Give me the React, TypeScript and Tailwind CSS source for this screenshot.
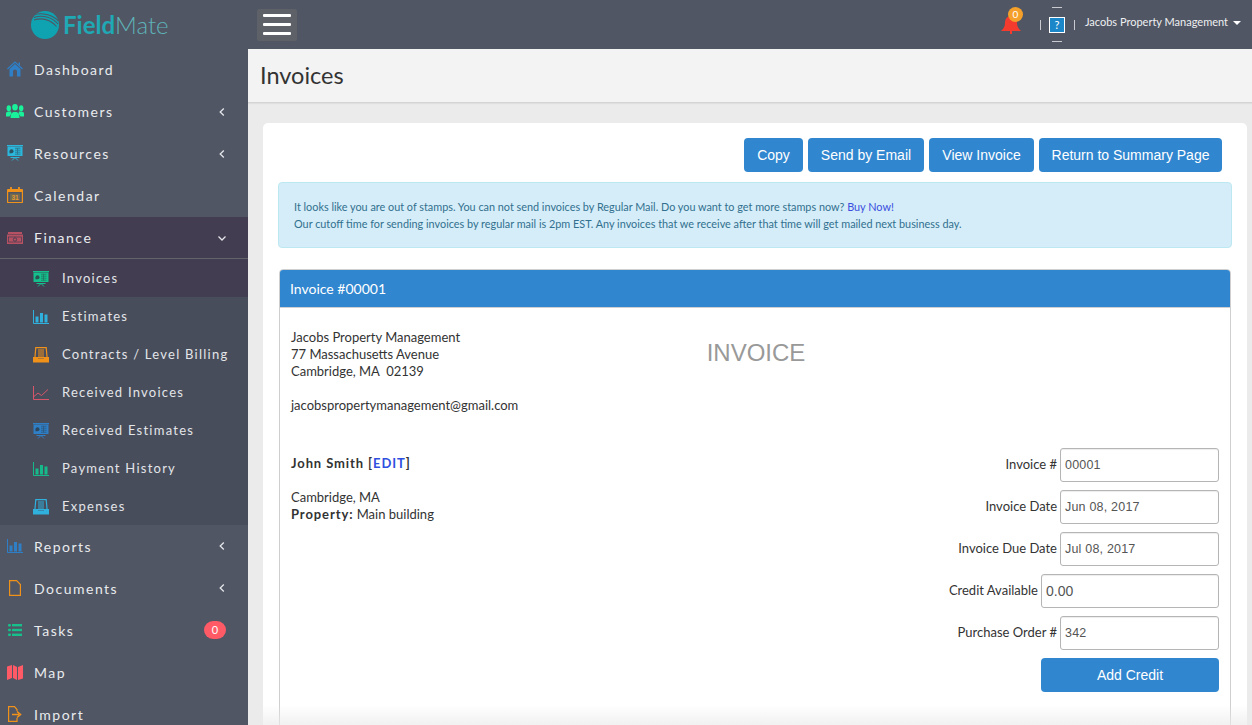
import React from 'react';

const Chevron = ({ down }: { down?: boolean }) => (
  <svg width="10" height="10" viewBox="0 0 10 10" fill="none" stroke="#e4e6ea" strokeWidth="1.3" className="absolute right-[21px] top-1/2 -translate-y-1/2">
    {down ? <path d="M1.5 3.5 5 7l3.5-3.5" /> : <path d="M6.8 1.5 3.2 5l3.6 3.500" />}
  </svg>
);

const Board = ({ color }: { color: string }) => (
  <svg width="16" height="16" viewBox="0 0 16 16">
    <rect x="0" y="0" width="16" height="1.200" fill={color} />
    <rect x=".5" y="1.500" width="15" height="9.500" fill={color} />
    <path d="M2.500 6.200a2 2 0 1 1 2 2h-2z" fill="#2c3a44" opacity=".8" />
    <path d="M8 3.200h5.500M8 5.200h5.500M8 7.200h5.500M8 9.200h5.500M10.500 3v6.500" stroke="#2c3a44" strokeWidth=".8" opacity=".55" />
    <path d="M3.500 12.500h9M8 12.500 5 15.500M8 12.500l3 3" stroke={color} strokeWidth="1" fill="none" />
  </svg>
);

const Bars = ({ color }: { color: string }) => (
  <svg width="16" height="14" viewBox="0 0 16 14">
    <path d="M.5 0v13.500H16" stroke={color} fill="none" />
    <rect x="2.500" y="6.500" width="3" height="6" fill={color} />
    <rect x="7" y="3" width="3" height="9.500" fill={color} />
    <rect x="11.500" y="4.500" width="3" height="8" fill={color} />
  </svg>
);

const Tray = ({ color }: { color: string }) => (
  <svg width="16" height="16" viewBox="0 0 16 16">
    <path d="M2.800 .6h10.400l.9 10H1.900z" fill="none" stroke={color} strokeWidth="1.200" />
    <path d="M5 3h6M5 5h6M5 7h6M5 9h6" stroke={color} strokeWidth="1.100" />
    <path d="M0 10h5v1.500h6V10h5v5.500H0z" fill={color} />
  </svg>
);

const Home = () => (
  <svg width="16" height="16" viewBox="0 0 16 16">
    <path d="M.5 8 8 1l7.500 7" fill="none" stroke="#2f7fc6" strokeWidth="1.200" />
    <path d="M11.500 1.500H13v3.500l-1.500-1.500z" fill="#2f7fc6" />
    <path d="M8 3 2.500 8v7.500h3.500V10.500a2 2 0 0 1 4 0v5h3.500V8z" fill="#2f7fc6" />
  </svg>
);

const People = () => (
  <svg width="18" height="14" viewBox="0 0 18 14" fill="#19f29a">
    <ellipse cx="9" cy="3.200" rx="2.800" ry="3.200" />
    <ellipse cx="2.800" cy="4.200" rx="2.200" ry="3" />
    <ellipse cx="15.200" cy="4.200" rx="2.200" ry="3" />
    <path d="M4.500 14c0-3 .5-5 2.800-6h3.400c2.300 1 2.800 3 2.800 6z" />
    <path d="M0 12.500V9.500c0-1 .8-1.500 2-2h3l.5 2-2 3zM18 12.500V9.500c0-1-.8-1.500-2-2h-3l-.5 2 2 3z" />
  </svg>
);

const Calendar = () => (
  <svg width="16" height="16" viewBox="0 0 16 16">
    <rect x=".6" y="2.500" width="14.800" height="13" rx=".5" fill="none" stroke="#f0921a" strokeWidth="1.200" />
    <rect x=".6" y="2.500" width="14.800" height="2.500" fill="#f0921a" />
    <path d="M4 0v3.500M12 0v3.500" stroke="#f0921a" strokeWidth="1.800" />
    <rect x="3" y="6.500" width="10" height="7" fill="#6f6a55" />
    <text x="8" y="12.500" textAnchor="middle" fontSize="6.500" fontWeight="700" fontFamily="Liberation Sans" fill="#e59a2c">31</text>
  </svg>
);

const Money = () => (
  <svg width="16" height="12" viewBox="0 0 16 12">
    <rect x="1" y="0" width="14" height="2" fill="#b65163" />
    <rect x="0" y="2.500" width="16" height="9.500" fill="#b65163" />
    <rect x="1.500" y="5" width="13" height="5" fill="none" stroke="#423d50" strokeWidth=".7" />
    <circle cx="8" cy="7.500" r="1.700" fill="none" stroke="#423d50" strokeWidth=".9" />
  </svg>
);

const Chart = () => (
  <svg width="16" height="14" viewBox="0 0 16 14" fill="none" stroke="#d9556a">
    <path d="M.5 0v13.500H16" />
    <path d="M1 10.500 5 7l3.500 2.500L15 3.500" />
  </svg>
);

const Doc = () => (
  <svg width="12" height="16" viewBox="0 0 12 16" fill="none" stroke="#f0921a" strokeWidth="1.200">
    <path d="M.6.600h7L11.400 4.500v10.900H.600z" />
  </svg>
);

const ListIcon = () => (
  <svg width="14" height="12" viewBox="0 0 14 12" fill="#16c08a">
    <rect y="0" width="3" height="2.400" rx="1" /><rect x="4" y="0" width="10" height="2.400" />
    <rect y="4.800" width="3" height="2.400" rx="1" /><rect x="4" y="4.800" width="10" height="2.400" />
    <rect y="9.600" width="3" height="2.400" rx="1" /><rect x="4" y="9.600" width="10" height="2.400" />
  </svg>
);

const MapIcon = () => (
  <svg width="16" height="15" viewBox="0 0 16 15" fill="#ff5a66">
    <path d="M0 1.500 5 0v13L0 15zM6 0l4 2v13l-4-2zM11 2l5-2v13.500L11 15z" />
  </svg>
);

const ImportIcon = () => (
  <svg width="14" height="16" viewBox="0 0 14 16" fill="none" stroke="#f0921a" strokeWidth="1.200">
    <path d="M9 5V3.500L6.500.6H.6v14.800H9V12" />
    <path d="M4 8.500h7M9 5.500l3.500 3-3.500 3" strokeWidth="1.600" />
  </svg>
);

const mainTop = [
  { label: 'Dashboard', icon: <Home /> },
  { label: 'Customers', icon: <People />, chevron: true },
  { label: 'Resources', icon: <Board color="#2bb7dc" />, chevron: true },
  { label: 'Calendar', icon: <Calendar /> },
];

const subItems = [
  { label: 'Invoices', icon: <Board color="#14c08c" />, active: true },
  { label: 'Estimates', icon: <Bars color="#2fb0dd" /> },
  { label: 'Contracts / Level Billing', icon: <Tray color="#f0921a" /> },
  { label: 'Received Invoices', icon: <Chart /> },
  { label: 'Received Estimates', icon: <Board color="#2f7fc6" /> },
  { label: 'Payment History', icon: <Bars color="#16b98a" /> },
  { label: 'Expenses', icon: <Tray color="#2fb0dd" /> },
];

const mainBottom = [
  { label: 'Reports', icon: <Bars color="#2f7fc6" />, chevron: true },
  { label: 'Documents', icon: <Doc />, chevron: true },
  { label: 'Tasks', icon: <ListIcon />, badge: '0' },
  { label: 'Map', icon: <MapIcon /> },
  { label: 'Import', icon: <ImportIcon /> },
];

type Item = { label: string; icon: React.ReactNode; chevron?: boolean; badge?: string };

const NavItem = ({ item, raised }: { item: Item; raised?: boolean }) => (
  <div className="relative flex h-[42px] shrink-0 items-center">
    <span className={`flex w-[34px] shrink-0 justify-center pr-[4px] ${raised ? 'pb-[2px]' : ''}`}>{item.icon}</span>
    <span className={`text-[14px] tracking-[1.5px] text-[#e9ebee] ${raised ? 'pb-[2px]' : ''}`}>{item.label}</span>
    {item.chevron && <Chevron />}
    {item.badge && (
      <span className="absolute right-[22px] top-[12px] flex h-[18px] w-[22px] items-center justify-center rounded-full bg-[#ff5a66] text-[11px] text-white">
        {item.badge}
      </span>
    )}
  </div>
);

const fields = [
  { label: 'Invoice #', value: '00001', w: 'w-[159px]' },
  { label: 'Invoice Date', value: 'Jun 08, 2017', w: 'w-[159px]' },
  { label: 'Invoice Due Date', value: 'Jul 08, 2017', w: 'w-[159px]' },
  { label: 'Credit Available', value: '0.00', w: 'w-[178px]', big: true },
  { label: 'Purchase Order #', value: '342', w: 'w-[159px]' },
];

const buttons = [
  { label: 'Copy', w: 'w-[59px]' },
  { label: 'Send by Email', w: 'w-[116px]' },
  { label: 'View Invoice', w: 'w-[105px]' },
  { label: 'Return to Summary Page', w: 'w-[183px]' },
];

export default function App() {
  return (
    <div className="relative flex h-[725px] w-[1252px] overflow-hidden bg-[#ebebeb] font-['Lato',sans-serif]">
      <aside className="flex w-[248px] shrink-0 flex-col overflow-hidden bg-[#505664]">
        <div className="flex h-[49px] shrink-0 items-center pl-[31px]">
          <svg width="28" height="28" viewBox="0 0 28 28">
            <circle cx="14" cy="14" r="14" fill="#0fa3b1" />
            <path d="M3 6.500C11 3.500 21 6 27 13M3 9c8-2.500 16-.5 22.500 6.500M3.500 3.500C11 1.500 21 3.500 27.500 10" stroke="#505664" strokeWidth="1.100" fill="none" />
          </svg>
          <span className="ml-[4px] text-[24px] leading-none">
            <span className="font-bold text-[#1fa9b5]">Field</span>
            <span className="font-light text-[#5fb3b8]">Mate</span>
          </span>
        </div>
        <nav className="flex flex-col">
          {mainTop.map((item) => (
            <NavItem key={item.label} item={item} raised />
          ))}
          <div className="relative flex h-[42px] shrink-0 items-center border-b border-[#62646c] bg-[#423d50]">
            <span className="flex w-[34px] shrink-0 justify-center pr-[4px]"><Money /></span>
            <span className="text-[14px] tracking-[1.5px] text-[#e9ebee]">Finance</span>
            <Chevron down />
          </div>
          <div className="flex flex-col bg-[#484d5b]">
            {subItems.map((item) => (
              <div key={item.label} className={`flex h-[38px] shrink-0 items-center pt-[2px] ${item.active ? 'bg-[#423d50]' : ''}`}>
                <span className="box-border flex w-[62px] shrink-0 justify-center pl-[24px] pr-[4px]">{item.icon}</span>
                <span className="whitespace-nowrap text-[13px] tracking-[1.25px] text-[#e3e5e9]">{item.label}</span>
              </div>
            ))}
          </div>
          {mainBottom.map((item) => (
            <NavItem key={item.label} item={item} />
          ))}
        </nav>
      </aside>

      <div className="flex min-w-0 flex-1 flex-col">
        <header className="flex h-[49px] shrink-0 items-center bg-[#505664] pl-[9px] pr-[11px]">
          <button className="flex h-[32px] w-[40px] flex-col items-center justify-center gap-[6px] rounded-[2px] bg-[#5e6268]">
            <span className="h-[3px] w-[28px] rounded-[1px] bg-white" />
            <span className="h-[3px] w-[28px] rounded-[1px] bg-white" />
            <span className="h-[3px] w-[28px] rounded-[1px] bg-white" />
          </button>
          <div className="ml-auto flex items-center">
            <div className="relative mr-[19px] h-[26px] w-[20px]">
              <svg width="20" height="26" viewBox="0 0 20 26" className="absolute left-0 top-[-1px]">
                <path d="M10 5c-4 0-6 3-6 7 0 4-2 6-4 8h20c-2-2-4-4-4-8 0-4-2-7-6-7z" fill="#f53b2e" />
                <rect x="9" y="20" width="2" height="3" fill="#f53b2e" />
              </svg>
              <span className="absolute left-[7px] top-[-5px] flex h-[15px] w-[15px] items-center justify-center rounded-full bg-[#f5a02a] text-[10px] text-white">0</span>
            </div>
            <span className="mr-[8px] h-[10px] w-px bg-[#c8cad0]" />
            <div className="relative flex h-[35px] w-[16px] items-center justify-center">
              <span className="absolute left-[3px] top-0 h-px w-[10px] bg-[#c8cad0]" />
              <span className="flex h-[16px] w-[16px] items-center justify-center border border-white bg-[#1b87c9] text-[11px] leading-none text-white">?</span>
              <span className="absolute bottom-0 left-[3px] h-px w-[10px] bg-[#c8cad0]" />
            </div>
            <span className="ml-[9px] h-[10px] w-px bg-[#c8cad0]" />
            <span className="mb-[5px] ml-[10px] text-[11px] text-[#eef0f2]">Jacobs Property Management</span>
            <span className="mb-[4px] ml-[5px] h-0 w-0 border-x-[4px] border-t-[4px] border-x-transparent border-t-white" />
          </div>
        </header>

        <div className="flex h-[54px] shrink-0 items-center border-b border-[#d4d4d4] bg-[#f3f3f3] pl-[12px] shadow-[0_1px_1px_rgba(0,0,0,0.05)]">
          <h1 className="text-[23.500px] font-normal text-[#333]">Invoices</h1>
        </div>

        <main className="ml-[15px] mr-[5px] mt-[20px] flex-1 rounded-t-[5px] bg-white px-[15px] pt-[15px]">
          <div className="flex justify-end gap-[5px] pr-[10px]">
            {buttons.map((b) => (
              <button key={b.label} className={`${b.w} h-[34px] rounded-[4px] bg-[#3086cf] font-['Liberation_Sans',sans-serif] text-[14px] text-white`}>
                {b.label}
              </button>
            ))}
          </div>

          <div className="mt-[10px] h-[66px] rounded-[4px] border border-[#bce8f1] bg-[#d5edf8] px-[15px] pt-[15px] text-[10.850px] leading-[17px] text-[#31708f]">
            <p>
              It looks like you are out of stamps. You can not send invoices by Regular Mail. Do you want to get more stamps now?{' '}
              <a className="text-[#3a4fe0]">Buy Now!</a>
            </p>
            <p>Our cutoff time for sending invoices by regular mail is 2pm EST. Any invoices that we receive after that time will get mailed next business day.</p>
          </div>

          <section className="ml-[1px] mr-[1px] mt-[21px] h-[500px] rounded-t-[4px] border border-[#cfcfcf]">
            <div className="flex h-[38px] items-center rounded-t-[3px] border-b border-[#cfcfcf] bg-[#3086cf] pl-[10px] text-[14px] text-white">
              Invoice #00001
            </div>
            <div className="relative px-[11px] pt-[21px] text-[13px] leading-[17px] text-[#333]">
              <p>Jacobs Property Management</p>
              <p>77 Massachusetts Avenue</p>
              <p>Cambridge, MA&nbsp; 02139</p>
              <p className="mt-[17px]">jacobspropertymanagement@gmail.com</p>

              <span className="absolute left-0 right-0 top-[30px] pl-[2px] text-center font-['Liberation_Sans',sans-serif] text-[24px] leading-[30px] text-[#999]">
                INVOICE
              </span>

              <div className="mt-[34px] flex justify-between">
                <div className="pt-[7px]">
                  <p className="font-bold tracking-[0.9px]">
                    John Smith [<a className="text-[#2f4fe0]">EDIT</a>]
                  </p>
                  <p className="mt-[17px]">Cambridge, MA</p>
                  <p>
                    <b className="tracking-[0.9px]">Property:</b> Main building
                  </p>
                </div>
                <div className="flex flex-col items-end">
                  {fields.map((f) => (
                    <div key={f.label} className="mb-[8px] flex items-start">
                      <span className="mr-[3px] mt-[8px]">{f.label}</span>
                      <div className={`${f.w} flex h-[34px] items-center rounded-[3px] border border-[#b5b5b5] pl-[4px] pt-[1px] font-['Liberation_Sans',sans-serif] text-[#555] shadow-[inset_0_1px_1px_rgba(0,0,0,0.075)] ${f.big ? 'text-[14px]' : 'text-[12.500px] tracking-[0.2px]'}`}>
                        {f.value}
                      </div>
                    </div>
                  ))}
                  <button className="h-[34px] w-[178px] rounded-[4px] bg-[#3086cf] font-['Liberation_Sans',sans-serif] text-[14px] text-white">
                    Add Credit
                  </button>
                </div>
              </div>
            </div>
          </section>
        </main>
      </div>

      <div className="pointer-events-none absolute bottom-0 left-[248px] right-0 h-[20px] bg-gradient-to-b from-transparent to-[#ebebeb]/70" />
    </div>
  );
}
